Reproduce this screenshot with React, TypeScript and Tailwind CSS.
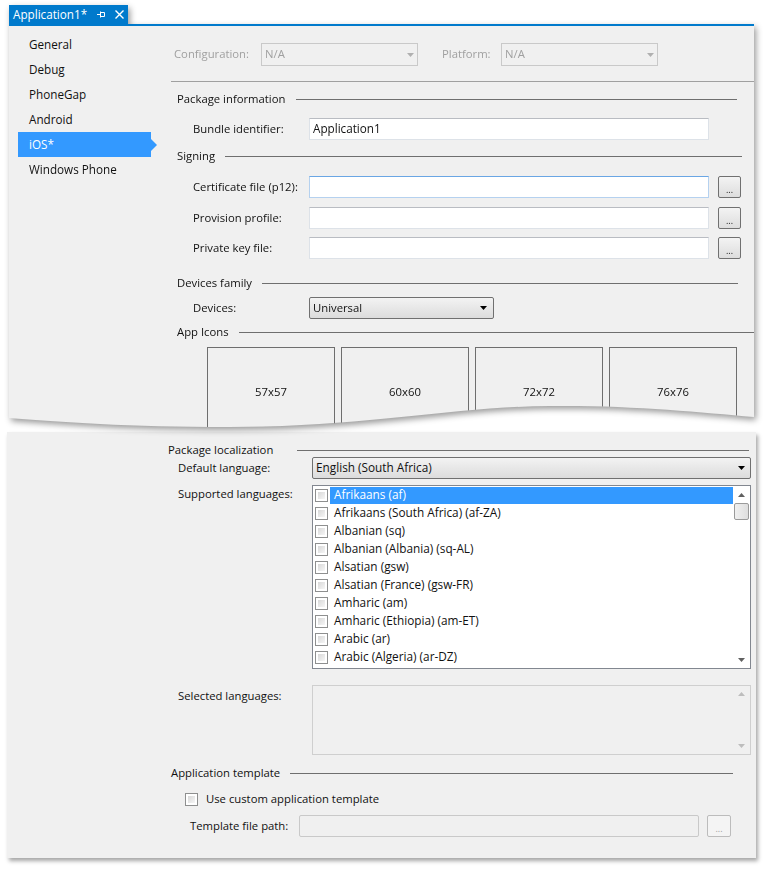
import React from "react";

const languages = [
  "Afrikaans (af)",
  "Afrikaans (South Africa) (af-ZA)",
  "Albanian (sq)",
  "Albanian (Albania) (sq-AL)",
  "Alsatian (gsw)",
  "Alsatian (France) (gsw-FR)",
  "Amharic (am)",
  "Amharic (Ethiopia) (am-ET)",
  "Arabic (ar)",
  "Arabic (Algeria) (ar-DZ)",
];

const navItems = ["General", "Debug", "PhoneGap", "Android", "iOS*", "Windows Phone"];

function Header({ title, lineClass }: { title: string; lineClass: string }) {
  return (
    <div className="flex h-[16px] items-center">
      <span className="whitespace-nowrap">{title}</span>
      <div className={`h-px flex-1 bg-[#6f6f6f] ${lineClass}`} />
    </div>
  );
}

function TextBox({ focused }: { focused?: boolean }) {
  return (
    <div
      className={
        focused
          ? "h-[22px] w-[400px] border border-[#b5d1ef] border-t-[#6aa6e4] bg-white"
          : "h-[22px] w-[400px] border border-[#dde2e8] border-t-[#b9bcc2] bg-white"
      }
    />
  );
}

function BrowseButton() {
  return (
    <div className="ml-[9px] flex h-[22px] w-[23px] items-end justify-center rounded-[2px] border border-[#707070] bg-gradient-to-b from-[#f3f3f3] to-[#dddddd] pb-[3px] text-[9px] leading-none">
      ...
    </div>
  );
}

function Tri({ dir, color }: { dir: "up" | "down"; color: string }) {
  return (
    <svg width="7" height="4" viewBox="0 0 7 4">
      <path d={dir === "down" ? "M0 0H7L3.5 4Z" : "M0 4H7L3.5 0Z"} fill={color} />
    </svg>
  );
}

function CheckBox() {
  return (
    <div className="h-[13px] w-[13px] shrink-0 border border-[#8e8f8f] bg-white p-[2px]">
      <div className="h-full w-full bg-gradient-to-br from-[#d8d8d8] to-[#f6f6f6]" />
    </div>
  );
}

export default function App() {
  return (
    <div className="min-h-[874px] bg-white pt-[5px] font-['Open_Sans',sans-serif] text-[11.3px] text-[#111]">
      {/* upper card, cut by the wave */}
      <div className="ml-[9px] w-[745px] drop-shadow-[2px_3px_3px_rgba(0,0,0,0.4)]">
        <div className="flex h-[19px] w-[119px] items-center bg-[#007acc] pl-[4px] text-[11.7px] text-white">
          <span>Application1*</span>
          <svg className="ml-[10px]" width="9" height="9" viewBox="0 0 9 9">
            <path d="M0 4.5H3M3.5 1.5V7.5M3.5 2.5H7.5V6.5H3.5" stroke="white" strokeWidth="1" fill="none" />
          </svg>
          <svg className="ml-[9px]" width="9" height="9" viewBox="0 0 9 9">
            <path d="M0.5 0.5L8.5 8.5M8.5 0.5L0.5 8.5" stroke="white" strokeWidth="1.4" />
          </svg>
        </div>
        <div className="flex h-[404px] border-t-2 border-[#007acc] bg-[#f0f0f0] [clip-path:path('M0_0_H745_V393_C690_388_620_381_540_382_C440_383_360_403_220_403_C120_403_50_398_0_394_Z')]">
          <div className="w-[162px] shrink-0 pt-[6px] pl-[9px] text-[11.7px]">
            {navItems.map((n) => (
              <div key={n} className="flex h-[25px] items-center">
                <div
                  className={
                    n === "iOS*"
                      ? "flex h-full w-[133px] items-center bg-[#3399ff] pl-[11px] text-white"
                      : "flex h-full w-[133px] items-center pl-[11px]"
                  }
                >
                  {n}
                </div>
                {n === "iOS*" && (
                  <svg width="6" height="12" viewBox="0 0 6 12">
                    <path d="M0 0L6 6L0 12Z" fill="#3399ff" />
                  </svg>
                )}
              </div>
            ))}
          </div>

          <div className="flex-1 pt-[17px]">
            <div className="flex h-[23px] items-center text-[#a0a0a0]">
              <span className="ml-[3px] w-[87px]">Configuration:</span>
              <div className="flex h-[23px] w-[157px] items-center justify-between border border-[#c9c9c9] px-[3px]">
                <span>N/A</span>
                <Tri dir="down" color="#b0b0b0" />
              </div>
              <span className="ml-[24px] w-[59px]">Platform:</span>
              <div className="flex h-[23px] w-[157px] items-center justify-between border border-[#c9c9c9] px-[3px]">
                <span>N/A</span>
                <Tri dir="down" color="#b0b0b0" />
              </div>
            </div>
            <div className="mt-[15px] h-px bg-[#a0a0a0]" />

            <div className="mt-[9px] pl-[6px]">
              <Header title="Package information" lineClass="ml-[11px] mr-[17px]" />
            </div>
            <div className="mt-[11px] flex items-center">
              <span className="w-[138px] pl-[22px]">Bundle identifier:</span>
              <div className="flex h-[22px] w-[400px] items-center border border-[#dde2e8] border-t-[#b9bcc2] bg-white pl-[3px] text-[11.7px]">
                Application1
              </div>
            </div>

            <div className="mt-[8px] pl-[6px]">
              <Header title="Signing" lineClass="ml-[10px] mr-[12px]" />
            </div>
            <div className="mt-[12px] flex items-center">
              <span className="w-[138px] pl-[22px]">Certificate file (p12):</span>
              <TextBox focused />
              <BrowseButton />
            </div>
            <div className="mt-[9px] flex items-center">
              <span className="w-[138px] pl-[22px]">Provision profile:</span>
              <TextBox />
              <BrowseButton />
            </div>
            <div className="mt-[8px] flex items-center">
              <span className="w-[138px] pl-[22px]">Private key file:</span>
              <TextBox />
              <BrowseButton />
            </div>

            <div className="mt-[16px] pl-[6px]">
              <Header title="Devices family" lineClass="ml-[10px] mr-[16px]" />
            </div>
            <div className="mt-[6px] flex items-center">
              <span className="w-[138px] pl-[22px]">Devices:</span>
              <div className="flex h-[22px] w-[185px] items-center justify-between rounded-[2px] border border-[#707070] bg-gradient-to-b from-[#f3f3f3] to-[#dcdcdc] px-[3px] pr-[6px]">
                <span>Universal</span>
                <Tri dir="down" color="#000" />
              </div>
            </div>

            <div className="mt-[5px] pl-[6px]">
              <Header title="App Icons" lineClass="ml-[10px]" />
            </div>
            <div className="mt-[7px] flex gap-[6px] pl-[36px]">
              {["57x57", "60x60", "72x72", "76x76"].map((s) => (
                <div
                  key={s}
                  className="flex h-[90px] w-[128px] items-center justify-center border border-[#6e6e6e]"
                >
                  {s}
                </div>
              ))}
            </div>
          </div>
        </div>
      </div>

      {/* lower card */}
      <div className="ml-[7px] mt-[4px] h-[426px] w-[749px] bg-[#f0f0f0] pt-[11px] shadow-[2px_3px_4px_rgba(0,0,0,0.35)]">
        <div className="pl-[161px]">
          <div className="flex h-[14px] items-center">
            <span>Package localization</span>
            <div className="ml-[24px] mr-[7px] h-px flex-1 bg-[#6f6f6f]" />
          </div>
        </div>
        <div className="flex items-center">
          <span className="w-[305px] pl-[171px]">Default language:</span>
          <div className="flex h-[22px] w-[439px] items-center justify-between rounded-[2px] border border-[#707070] bg-gradient-to-b from-[#f3f3f3] to-[#dcdcdc] px-[3px] pr-[5px] text-[11.8px]">
            <span>English (South Africa)</span>
            <Tri dir="down" color="#000" />
          </div>
        </div>

        <div className="mt-[6px] flex items-start">
          <span className="w-[305px] pl-[171px] pt-[1px] leading-[16px]">Supported languages:</span>
          <div className="flex h-[184px] w-[439px] border border-[#828790] bg-white text-[11.8px]">
            <div className="flex-1">
              {languages.map((l, i) => (
                <div key={l} className="flex h-[18px] items-center pl-[2px]">
                  <CheckBox />
                  <div
                    className={
                      i === 0
                        ? "ml-[2px] flex h-[17px] flex-1 items-center bg-[#3399ff] pl-[4px] text-white"
                        : "ml-[2px] flex h-[17px] flex-1 items-center pl-[4px]"
                    }
                  >
                    {l}
                  </div>
                </div>
              ))}
            </div>
            <div className="flex w-[17px] flex-col">
              <div className="flex h-[17px] items-center justify-center">
                <Tri dir="up" color="#606060" />
              </div>
              <div className="mx-[1px] h-[17px] rounded-[2px] border border-[#9a9a9a] bg-gradient-to-r from-[#f0f0f0] to-[#dedede]" />
              <div className="flex-1" />
              <div className="flex h-[17px] items-center justify-center">
                <Tri dir="down" color="#606060" />
              </div>
            </div>
          </div>
        </div>

        <div className="mt-[16px] flex items-start">
          <span className="w-[305px] pl-[171px] pt-[3px]">Selected languages:</span>
          <div className="flex h-[70px] w-[439px] justify-end border border-[#cfcfcf] bg-[#f0f0f0]">
            <div className="flex w-[17px] flex-col justify-between py-[6px]">
              <div className="flex justify-center">
                <Tri dir="up" color="#bdbdbd" />
              </div>
              <div className="flex justify-center">
                <Tri dir="down" color="#bdbdbd" />
              </div>
            </div>
          </div>
        </div>

        <div className="mt-[11px] pl-[164px]">
          <div className="flex h-[14px] items-center">
            <span>Application template</span>
            <div className="ml-[10px] mr-[23px] h-px flex-1 bg-[#6f6f6f]" />
          </div>
        </div>
        <div className="mt-[12px] flex h-[14px] items-center pl-[178px]">
          <CheckBox />
          <span className="ml-[8px]">Use custom application template</span>
        </div>
        <div className="mt-[9px] flex items-center">
          <span className="w-[292px] pl-[183px]">Template file path:</span>
          <div className="h-[22px] w-[400px] rounded-[2px] border border-[#c9c9c9] bg-[#f0f0f0]" />
          <div className="ml-[8px] flex h-[22px] w-[24px] items-end justify-center rounded-[2px] border border-[#bcbcbc] bg-[#f4f4f4] pb-[3px] text-[9px] leading-none text-[#a0a0a0]">
            ...
          </div>
        </div>
      </div>
    </div>
  );
}
